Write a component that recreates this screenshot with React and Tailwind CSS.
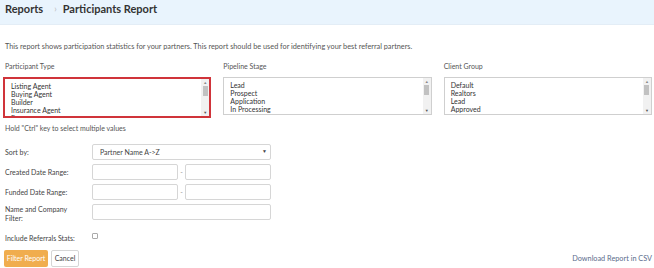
import React from "react";

function ListBox({ items, highlight }) {
  return (
    <div
      className={
        "relative overflow-hidden bg-white " +
        (highlight ? "h-[41px] border-2 border-[#d0343a]" : "mt-[2px] h-[38px] border border-[#cfcfcf]")
      }
    >
      <div className="pl-[6px] pt-[3px] text-[7px] leading-[8px] text-[#333]">
        {items.map((it) => (
          <div key={it}>{it}</div>
        ))}
      </div>
      <div className="absolute right-0 top-0 bottom-0 flex w-[8px] flex-col items-center bg-[#f1f1f1]">
        <span className="mt-[1px] text-[4px] leading-[5px] text-[#888]">▲</span>
        <div className="mt-[1px] h-[10px] w-[5px] bg-[#c1c1c1]" />
        <div className="flex-1" />
        <span className="mb-[1px] text-[4px] leading-[5px] text-[#555]">▼</span>
      </div>
    </div>
  );
}

function Input({ w = "w-full" }) {
  return <div className={w + " h-[16px] shrink-0 rounded-[2px] border border-[#d6d6d6] bg-white"} />;
}

export default function App() {
  return (
    <div
      className="h-[268px] w-[654px] overflow-hidden bg-white text-[#444]"
      style={{ fontFamily: "Lato, 'Open Sans', sans-serif" }}
    >
      <div className="flex h-[25px] items-start border-b border-[#e3edf6] bg-[#e9f4fd] pl-[5px] pt-[2px]">
        <span className="text-[11px] font-bold leading-[13px] text-[#333]">Reports</span>
        <span className="ml-[11px] text-[9px] leading-[13px] text-[#bbb]">›</span>
        <span className="ml-[6px] text-[11px] font-bold leading-[13px] text-[#333]">
          Participants Report
        </span>
      </div>

      <p className="mt-[17px] pl-[5px] text-[7.3px] leading-[9px] text-[#555]">
        This report shows participation statistics for your partners. This report should be used for
        identifying your best referral partners.
      </p>

      <div className="mt-[11px] grid grid-cols-3 gap-[12px] pl-[3px] pr-[2px]">
        <div>
          <div className="mb-[6px] pl-[2px] text-[7px] leading-[9px] text-[#555]">Participant Type</div>
          <ListBox highlight items={["Listing Agent", "Buying Agent", "Builder", "Insurance Agent", "Escrow"]} />
        </div>
        <div>
          <div className="mb-[6px] text-[7px] leading-[9px] text-[#555]">Pipeline Stage</div>
          <ListBox items={["Lead", "Prospect", "Application", "In Processing", "Funded Loan"]} />
        </div>
        <div>
          <div className="mb-[6px] text-[7px] leading-[9px] text-[#555]">Client Group</div>
          <ListBox items={["Default", "Realtors", "Lead", "Approved", "Pre-Approved"]} />
        </div>
      </div>

      <div className="mt-[6px] pl-[5px] text-[7px] leading-[9px] text-[#555]">
        Hold "Ctrl" key to select multiple values
      </div>

      <div className="mt-[11px] flex flex-col gap-[4px] pl-[5px] text-[7px] text-[#444]">
        <div className="flex items-center">
          <span className="w-[87px]">Sort by:</span>
          <div className="flex h-[16px] w-[179px] items-center justify-between rounded-[2px] border border-[#d6d6d6] bg-white pl-[7px] pr-[3px]">
            <span>Partner Name A-&gt;Z</span>
            <span className="text-[5px]">▼</span>
          </div>
        </div>
        <div className="flex items-center">
          <span className="w-[87px]">Created Date Range:</span>
          <Input w="w-[86px]" />
          <span className="w-[7px] text-center text-[#999]">-</span>
          <Input w="w-[86px]" />
        </div>
        <div className="flex items-center">
          <span className="w-[87px]">Funded Date Range:</span>
          <Input w="w-[86px]" />
          <span className="w-[7px] text-center text-[#999]">-</span>
          <Input w="w-[86px]" />
        </div>
        <div className="flex items-start">
          <span className="w-[87px] pt-[1px] leading-[9px]">
            Name and Company
            <br />
            Filter:
          </span>
          <Input w="w-[179px]" />
        </div>
      </div>

      <div className="mt-[10px] flex items-center pl-[5px] text-[7px] leading-[9px] text-[#444]">
        <span className="w-[87px]">Include Referrals Stats:</span>
        <div className="mb-[5px] h-[6px] w-[6px] rounded-[1px] border border-[#aaa] bg-white" />
      </div>

      <div className="mt-[6px] flex items-center justify-between pl-[4px] pr-[2px]">
        <div className="flex gap-[3px]">
          <button className="h-[17px] w-[44px] rounded-[2px] bg-[#f0ad4e] text-[7px] text-white">
            Filter Report
          </button>
          <button className="h-[17px] w-[28px] rounded-[2px] border border-[#d6d6d6] bg-white text-[7px] text-[#444]">
            Cancel
          </button>
        </div>
        <span className="mt-[1px] text-[7.3px] text-[#5b6b8c]">Download Report in CSV</span>
      </div>
    </div>
  );
}
